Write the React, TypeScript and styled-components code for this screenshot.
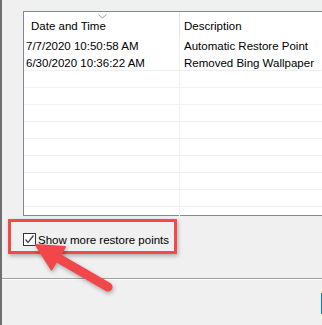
import React from "react";
import styled, { createGlobalStyle } from "styled-components";

const Global = createGlobalStyle`
  html, body { margin: 0; padding: 0; background: #f0f0f0; }
  body { font-family: "Liberation Sans", Arial, sans-serif; }
`;

const Page = styled.div`
  position: relative;
  width: 322px;
  height: 325px;
  box-sizing: border-box;
  background: #f0f0f0;
  border-left: 2px solid #6f6f6f;
  overflow: hidden;
  display: flex;
  flex-direction: column;
`;

const ListBox = styled.div`
  margin: 11px 0 0 21px;
  width: 330px;
  height: 205px;
  box-sizing: border-box;
  border: 1px solid #828790;
  background: #fff;
  display: flex;
  flex-direction: column;
  flex-shrink: 0;
`;

const HeaderRow = styled.div`
  display: flex;
  height: 25px;
  flex-shrink: 0;
`;

const HeaderCell = styled.div<{ $w?: number }>`
  position: relative;
  box-sizing: border-box;
  width: ${(p) => (p.$w ? `${p.$w}px` : "auto")};
  flex: ${(p) => (p.$w ? "none" : "1")};
  padding: 2px 0 0 ${(p) => (p.$w ? "7px" : "4px")};
  display: flex;
  align-items: center;
  font-size: 11.5px;
  color: #000;
  white-space: nowrap;
  border-right: ${(p) => (p.$w ? "1px solid #e5e5e5" : "none")};
  margin: ${(p) => (p.$w ? "1px 0 0 0" : "0")};
`;

const SortGlyph = styled.svg`
  position: absolute;
  top: 1px;
  left: 50%;
  margin-left: -4px;
`;

const Row = styled.div<{ $first?: boolean }>`
  display: flex;
  height: 17px;
  box-sizing: border-box;
  border-bottom: 1px solid ${(p) => (p.$first ? "transparent" : "#f0f0f0")};
  flex-shrink: 0;
`;

const Cell = styled.div<{ $w?: number }>`
  box-sizing: border-box;
  width: ${(p) => (p.$w ? `${p.$w}px` : "auto")};
  flex: ${(p) => (p.$w ? "none" : "1")};
  padding: 2px 0 0 ${(p) => (p.$w ? "2px" : "4px")};
  border-right: ${(p) => (p.$w ? "1px solid #f0f0f0" : "none")};
  display: flex;
  align-items: center;
  font-size: 11.5px;
  color: #000;
  white-space: nowrap;
`;

const Highlight = styled.div`
  margin: 3px 0 0 6px;
  width: 169px;
  height: 35px;
  box-sizing: border-box;
  border: 3px solid #f24a4a;
  box-shadow: 1px 2px 4px rgba(0, 0, 0, 0.28);
  display: flex;
  align-items: flex-start;
  padding: 11px 0 0 12px;
  flex-shrink: 0;
`;

const CheckLabel = styled.label`
  display: flex;
  align-items: center;
  gap: 2px;
  font-size: 11.5px;
  color: #000;
  white-space: nowrap;
`;

const Box = styled.span`
  width: 13px;
  height: 13px;
  flex-shrink: 0;
  box-sizing: border-box;
  border: 1px solid #333;
  background: #fff;
  display: flex;
  align-items: center;
  justify-content: center;
`;

const Separator = styled.div`
  margin-top: 24px;
  height: 1px;
  background: #a0a0a0;
  border-bottom: 1px solid #fff;
  flex-shrink: 0;
`;

const Footer = styled.div`
  display: flex;
  padding: 13px 0 0 319px;
`;

const Button = styled.div`
  width: 75px;
  height: 21px;
  flex-shrink: 0;
  box-sizing: border-box;
  border: 1px solid #0078d7;
  background: #e1e1e1;
`;

const Arrow = styled.svg`
  position: absolute;
  left: -2px;
  top: 0;
  pointer-events: none;
  filter: drop-shadow(1px 2px 2px rgba(0, 0, 0, 0.3));
`;

const rows = [
  ["7/7/2020 10:50:58 AM", "Automatic Restore Point"],
  ["6/30/2020 10:36:22 AM", "Removed Bing Wallpaper"],
  ["", ""],
  ["", ""],
  ["", ""],
  ["", ""],
  ["", ""],
  ["", ""],
  ["", ""],
  ["", ""],
  ["", ""],
];

export default function App() {
  return (
    <>
      <Global />
      <Page>
        <ListBox>
          <HeaderRow>
            <HeaderCell $w={156}>
              <SortGlyph width="9" height="5" viewBox="0 0 9 5">
                <polyline points="0.5,0.5 4.5,4 8.5,0.5" fill="none" stroke="#9a9a9a" strokeWidth="1" />
              </SortGlyph>
              Date and Time
            </HeaderCell>
            <HeaderCell>Description</HeaderCell>
          </HeaderRow>
          {rows.map((r, i) => (
            <Row key={i} $first={i === 0}>
              <Cell $w={156}>{r[0]}</Cell>
              <Cell>{r[1]}</Cell>
            </Row>
          ))}
        </ListBox>
        <Highlight>
          <CheckLabel>
            <Box>
              <svg width="11" height="11" viewBox="0 0 11 11">
                <polyline points="1.5,5.5 4,8.5 9.5,1.5" fill="none" stroke="#444" strokeWidth="1.3" />
              </svg>
            </Box>
            Show more restore points
          </CheckLabel>
        </Highlight>
        <Separator />
        <Footer>
          <Button />
        </Footer>
        <Arrow width="322" height="325" viewBox="0 0 322 325">
          <line x1="108" y1="287" x2="58" y2="258" stroke="#f2474a" strokeWidth="9" strokeLinecap="round" />
          <polygon points="36,245 65,247 51.5,269.5" fill="#f2474a" stroke="#f2474a" strokeWidth="2" strokeLinejoin="round" />
        </Arrow>
      </Page>
    </>
  );
}
